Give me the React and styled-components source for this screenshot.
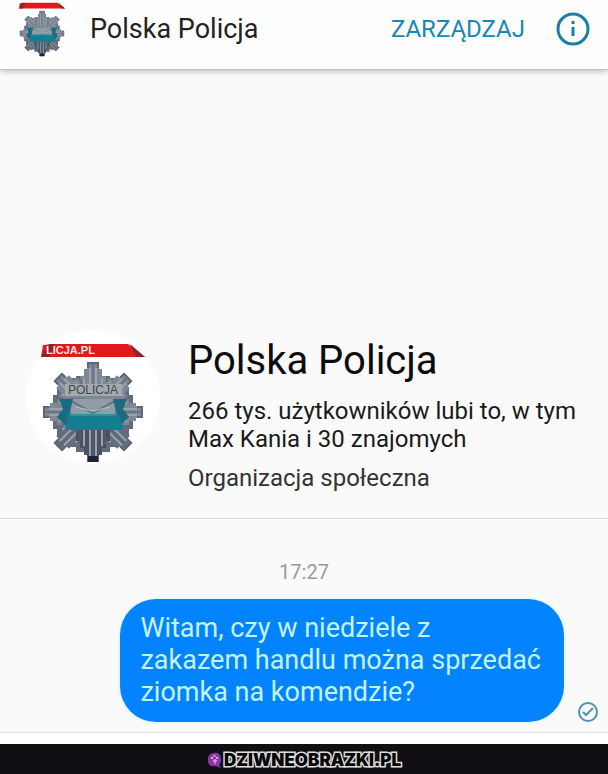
import React from 'react';
import styled, { createGlobalStyle } from 'styled-components';

const GlobalStyle = createGlobalStyle`
	* {
		box-sizing: border-box;
	}
	body {
		margin: 0;
		background: #fafafa;
		color: #111;
		font-family: Roboto, "Liberation Sans", sans-serif;
	}
	h1, h2, p {
		margin: 0;
		font-weight: 400;
	}
`

const Page = styled.div`
	display: flex;
	flex-direction: column;
	min-height: 100vh;
`

const Header = styled.header`
	display: flex;
	align-items: center;
	height: 70px;
	padding: 0 17px 12px 18px;
	background: #fefefe;
	border-bottom: 1px solid #c4c4c4;
	box-shadow: 0 1px 6px rgba(0, 0, 0, 0.28);
`

const HeaderBadge = styled.svg`
	width: 48px;
	height: 58px;
	flex: none;
`

const HeaderName = styled.h1`
	flex: 1;
	margin-left: 24px;
	font-size: 27px;
	line-height: 32px;
	color: #222;
`

const TextButton = styled.button`
	border: 0;
	padding: 0;
	background: none;
	font: inherit;
	font-size: 24px;
	line-height: 32px;
	color: #1688b4;
	text-transform: uppercase;
	cursor: pointer;
`

const IconButton = styled.button`
	display: flex;
	margin-left: 30px;
	border: 0;
	padding: 0;
	background: none;
	color: #1b7ea6;
	cursor: pointer;
`

const Chat = styled.main`
	flex: 1;
	display: flex;
	flex-direction: column;
	justify-content: flex-end;
	padding-top: 40px;
`

const Profile = styled.section`
	display: flex;
	gap: 28px;
	padding: 0 24px 26px 26px;
	border-bottom: 1px solid #d9d9d9;
`

const Avatar = styled.div`
	flex: none;
	width: 134px;
	height: 134px;
	margin-top: -7px;
	border-radius: 50%;
	background: #fff;

	svg {
		display: block;
		width: 100%;
		height: 100%;
	}
`

const ProfileText = styled.div`
	flex: 1;
	font-size: 24px;
	line-height: 28px;
	color: #1a1a1a;
`

const ProfileName = styled.h2`
	font-size: 40px;
	line-height: 48px;
	margin-bottom: 12px;
	color: #0c0c0c;
`

const Category = styled.p`
	margin-top: 11px;
	color: #333;
`

const Messages = styled.section`
	display: flex;
	flex-direction: column;
	padding: 41px 8px 10px;
	border-bottom: 1px solid #dcdfe0;
`

const Time = styled.time`
	align-self: center;
	margin-bottom: 14px;
	font-size: 20px;
	line-height: 25px;
	color: #9a9a9a;
`

const MessageRow = styled.div`
	display: flex;
	justify-content: flex-end;
	align-items: flex-end;
	gap: 12px;

	svg {
		flex: none;
	}
`

const Bubble = styled.p`
	padding: 13px 23px 14px 20px;
	border-radius: 36px;
	background: #0384fe;
	box-shadow: 0 0 3px #aef3ff;
	font-size: 27px;
	line-height: 32px;
	color: #c2f3ff;
`

const Composer = styled.div`
	height: 11px;
	background: #fff;
`

const Footer = styled.footer`
	display: flex;
	align-items: center;
	justify-content: center;
	gap: 2px;
	height: 30px;
	padding-top: 2px;
	background: #110f13;
`

const SiteName = styled.a`
	font-family: Inter, "Open Sans", sans-serif;
	font-size: 17px;
	font-weight: 900;
	line-height: 24px;
	color: #050505;
	text-decoration: none;
	-webkit-text-stroke: 3px #dcdcdc;
	paint-order: stroke fill;
`

const ribs = [-9, -3, 3, 9];

function Star({ withText }) {
	return (
		<>
			<path d="M22 25 34 24 H107 L124 37 H20 Z" fill="#e1191c" />
			<path d="M20 37 28 24 H34 L29 37 Z M109 24 124 37 H115 Z" fill="#8d2428" />
			{withText && (
				<text x="25" y="34" fontSize="11" fontWeight="700" fill="#ffe4e0" fontFamily="Liberation Sans, sans-serif">LICJA.PL</text>
			)}
			<g transform="translate(72 92)">
				<path d="M-17 -36 H17 V-34 H26 V-30 H32 V-24 H36 V-17 H40 V17 H36 V24 H32 V30 H26 V35 H17 V40 H-17 V35 H-26 V30 H-32 V24 H-36 V17 H-40 V-17 H-36 V-24 H-32 V-30 H-26 V-34 H-17 Z" fill="#626c7c" />
				{[45, 135, 225, 315, 0, 90, 180, 270].map((angle) => (
					<g key={angle} transform={`rotate(${angle})`}>
						<path
							d="M-17 0 V-29 H-13 V-36 H-9 V-43 H-6 V-49 H6 V-43 H9 V-36 H13 V-29 H17 V0 Z"
							fill={angle === 180 ? '#4b5265' : angle > 90 && angle < 270 ? '#646d7c' : '#7f8793'}
						/>
						{ribs.map((x) => (
							<path key={x} d={`M${x} -8 V${Math.abs(x) > 5 ? -34 : -44}`} stroke="#99a2ad" strokeWidth="2" />
						))}
						<path d="M-12 -10 V-33 M0 -10 V-48 M13 -8 V-28" stroke="#5b6575" strokeWidth="1" />
						<path d="M-5 -44 V-49 H5 V-44" fill="none" stroke="#5d6778" strokeWidth="2" />
					</g>
				))}
				<path d="M-5 47 H5" stroke="#1d2338" strokeWidth="6" />
				<path d="M-27 -13 H27 L20 6 H-20 Z" fill="#929ca8" />
				<path d="M-22 -11 0 1 22 -11" fill="none" stroke="#697586" strokeWidth="2" />
				<path d="M-17 -5 0 -1 17 -5" fill="none" stroke="#b9c2ca" strokeWidth="1" />
				<path d="M-34 -13 -20 -13 -23 0 -27 14 -36 5 -30 -3 Z M34 -13 20 -13 23 0 27 14 36 5 30 -3 Z" fill="#1b6c80" />
				<path d="M-25 2 H25 L31 18 H-28 Z" fill="#147f8f" />
				<path d="M-23 3 H23" stroke="#4fa0ae" strokeWidth="1" />
				{withText && (
					<>
						<path d="M-28 -28 H29 V-16 H-28 Z" fill="#a3a9ae" />
						<text x="0" y="-18" textAnchor="middle" fontSize="12" fill="#3f454b" fontFamily="Liberation Sans, sans-serif">POLICJA</text>
					</>
				)}
			</g>
		</>
	);
}

function InfoIcon() {
	return (
		<svg width="36" height="36" viewBox="0 0 36 36" fill="none" aria-hidden="true">
			<circle cx="18" cy="18" r="15" stroke="currentColor" strokeWidth="3" />
			<path d="M18 16 V25 M18 10 V13" stroke="currentColor" strokeWidth="3" />
		</svg>
	);
}

function SentIcon() {
	return (
		<svg width="24" height="22" viewBox="0 0 24 22" fill="none" stroke="#4b93ad" strokeWidth="2" role="img" aria-label="Wysłano">
			<circle cx="12" cy="12" r="9" />
			<path d="M7 12 10 15 17 8" strokeWidth="2" />
		</svg>
	);
}

function SiteLogo() {
	return (
		<svg width="15" height="17" viewBox="0 0 15 17" aria-hidden="true">
			<path d="M7 1 C11 0 14 3 14 7 C14 10 13 12 12 13 L14 16 L9 14 C4 15 1 13 1 9 C0 5 3 1 7 1 Z" fill="#8f35a5" />
			<circle cx="5" cy="6" r="1" fill="#e9c4f0" />
			<circle cx="10" cy="6" r="1" fill="#e9c4f0" />
			<path d="M6 4 H9 M8 7 V12 M6 9 H10" stroke="#e9c4f0" />
		</svg>
	);
}

function App() {
	return (
		<Page>
			<GlobalStyle />
			<Header>
				<HeaderBadge viewBox="18 18 108 128" preserveAspectRatio="none" aria-hidden="true">
					<Star />
				</HeaderBadge>
				<HeaderName>Polska Policja</HeaderName>
				<TextButton type="button">Zarządzaj</TextButton>
				<IconButton type="button" aria-label="Informacje">
					<InfoIcon />
				</IconButton>
			</Header>
			<Chat>
				<Profile>
					<Avatar>
						<svg viewBox="5 10 134 134" role="img" aria-label="Polska Policja">
							<Star withText />
						</svg>
					</Avatar>
					<ProfileText>
						<ProfileName>Polska Policja</ProfileName>
						<p>266 tys. użytkowników lubi to, w tym Max Kania i 30 znajomych</p>
						<Category>Organizacja społeczna</Category>
					</ProfileText>
				</Profile>
				<Messages>
					<Time>17:27</Time>
					<MessageRow>
						<Bubble>
							Witam, czy w niedziele z<br />
							zakazem handlu można sprzedać<br />
							ziomka na komendzie?
						</Bubble>
						<SentIcon />
					</MessageRow>
				</Messages>
			</Chat>
			<Composer />
			<Footer>
				<SiteLogo />
				<SiteName href="#">DZIWNEOBRAZKI.PL</SiteName>
			</Footer>
		</Page>
	);
}

export default App;
